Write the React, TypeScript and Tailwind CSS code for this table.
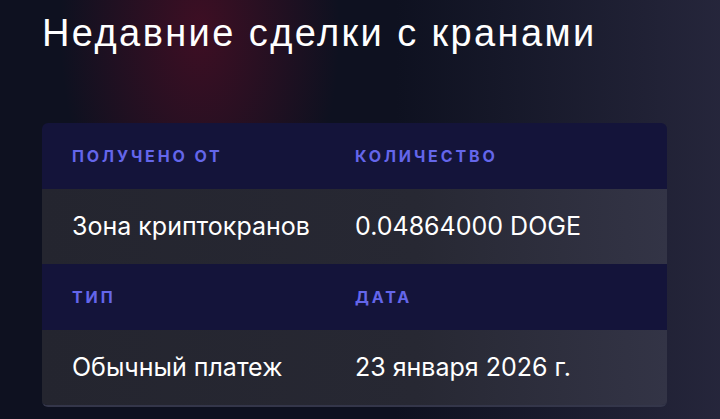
export default function App() {
  const rows = [
    { label: 'Получено от', value: 'Зона криптокранов' },
    { label: 'Количество', value: '0.04864000 DOGE' },
  ];
  const rows2 = [
    { label: 'Тип', value: 'Обычный платеж' },
    { label: 'Дата', value: '23 января 2026 г.' },
  ];

  return (
    <div className="relative h-[419px] w-[720px] overflow-hidden bg-[#0e1120] font-['Inter',sans-serif]">
      {/* Background glow */}
      <div className="pointer-events-none absolute inset-0 bg-[radial-gradient(ellipse_140px_240px_at_200px_30px,rgba(70,14,36,0.85),transparent)]" />
      <div className="pointer-events-none absolute inset-0 bg-[linear-gradient(90deg,transparent_55%,rgba(40,40,62,0.9)_100%)]" />

      <div className="relative px-[42px] pt-[12px]">
        <h1 className="font-['Liberation_Sans',Arial,sans-serif] text-[38px] leading-[42px] tracking-[2.4px] text-white">
          Недавние сделки с кранами
        </h1>

        <div className="mt-[69px] w-[625px] overflow-hidden rounded-md border-b-2 border-[#34364a]">
          <Section items={rows} />
          <Section items={rows2} />
        </div>
      </div>
    </div>
  );
}

function Section({ items }: { items: { label: string; value: string }[] }) {
  return (
    <div>
      <div className="grid h-[66px] grid-cols-[283px_1fr] items-center bg-[#14143a]">
        {items.map((it) => (
          <div
            key={it.label}
            className="pl-[30px] text-[16px] font-bold uppercase tracking-[0.18em] text-[#6466ea]"
          >
            {it.label}
          </div>
        ))}
      </div>
      <div className="grid h-[75px] grid-cols-[283px_1fr] items-center bg-[linear-gradient(90deg,#24252f_0%,#272833_60%,#333446_100%)]">
        {items.map((it) => (
          <div key={it.value} className="pl-[30px] text-[25px] text-white">
            {it.value}
          </div>
        ))}
      </div>
    </div>
  );
}
